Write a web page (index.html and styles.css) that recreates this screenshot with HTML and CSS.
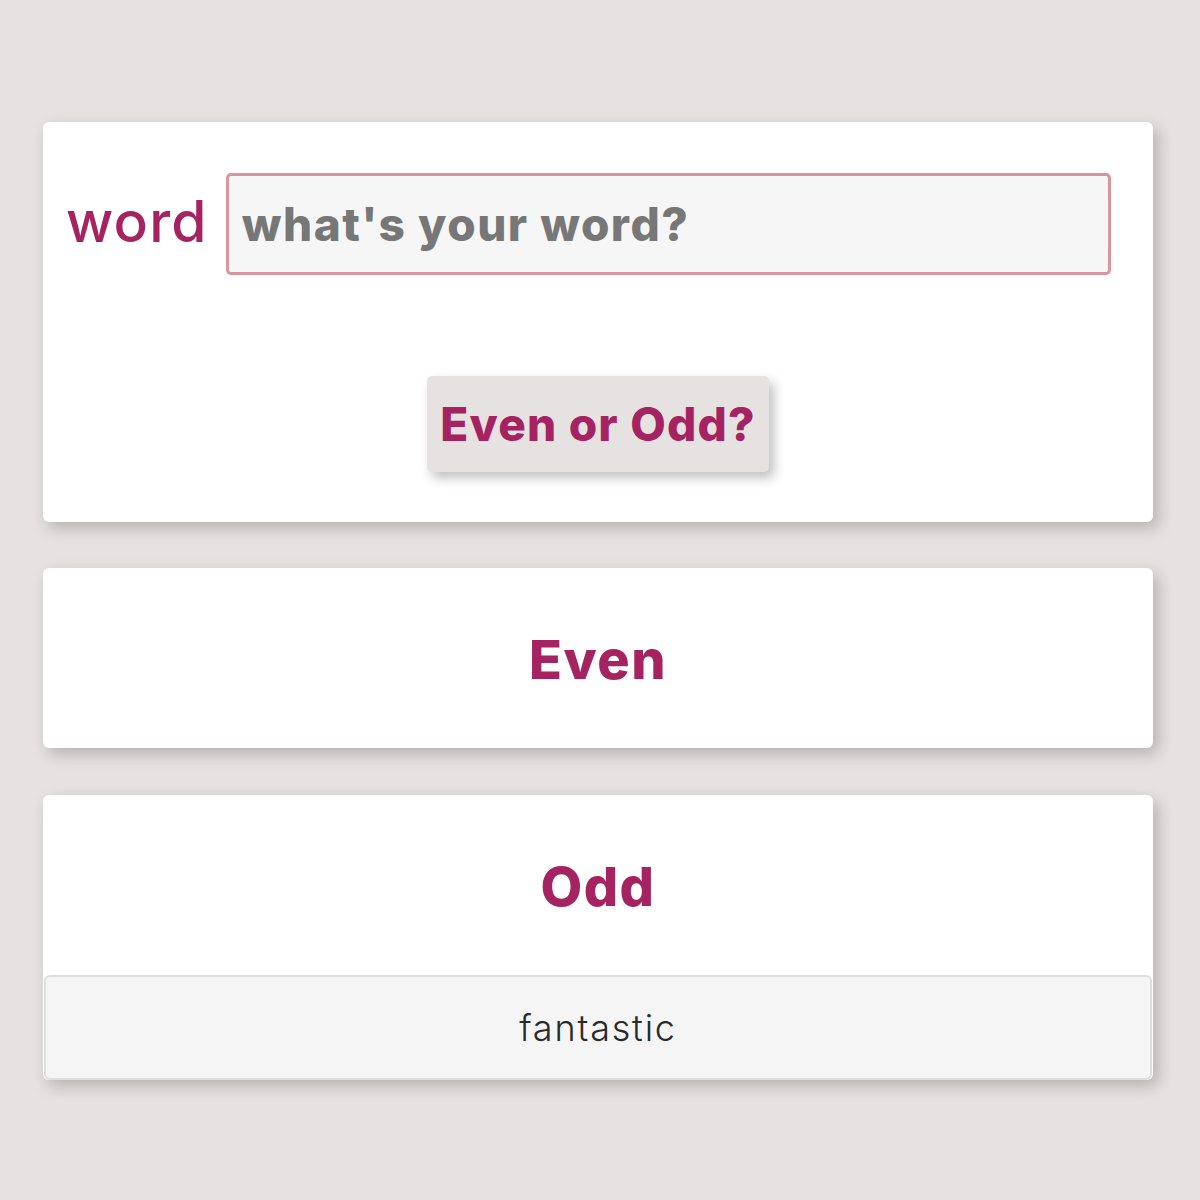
FILE: index.html
```html
<!DOCTYPE html>
<html>
<head>
<meta charset="utf-8">
<link rel="stylesheet" href="styles.css">
</head>
<body>
<main class="page">
  <section class="card card-form">
    <div class="field-row">
      <label class="field-label" for="word">word</label>
      <input class="field-input" id="word" type="text" placeholder="what's your word?">
    </div>
    <div class="button-row">
      <button class="check-button">Even or Odd?</button>
    </div>
  </section>
  <section class="card card-result">
    <h2 class="result-title">Even</h2>
  </section>
  <section class="card card-odd">
    <div class="card-body">
      <h2 class="result-title">Odd</h2>
    </div>
    <div class="card-footer">fantastic</div>
  </section>
</main>
</body>
</html>
```
FILE: styles.css
```css
* { box-sizing: border-box; }
html, body { margin: 0; padding: 0; }
body {
  background: #e6e2e1;
  font-family: "Inter", "Open Sans", sans-serif;
  width: 1200px;
  height: 1200px;
}
.page {
  padding: 122px 47px 0 43px;
  display: flex;
  flex-direction: column;
  gap: 46px;
}
.card {
  background: #ffffff;
  border-radius: 6px;
  box-shadow: 5px 6px 16px rgba(0, 0, 0, 0.22);
}
.card-form {
  height: 400px;
  padding-top: 51px;
}
.field-row {
  display: flex;
  align-items: center;
  gap: 18px;
  padding: 0 42px 0 23px;
}
.field-label {
  color: #a62361;
  font-size: 57px;
  font-weight: 500;
  letter-spacing: 1.2px;
  line-height: 1;
  padding-bottom: 6px;
}
.field-input {
  flex: 1;
  height: 102px;
  border: 3px solid #d8959e;
  border-radius: 5px;
  background: #f6f6f6;
  padding: 0 13px;
  font-family: inherit;
  font-size: 46px;
  font-weight: 800;
  letter-spacing: 1.5px;
  color: #777777;
  outline: none;
}
.field-input::placeholder {
  color: #777777;
  opacity: 1;
}
.button-row {
  display: flex;
  justify-content: center;
  margin-top: 101px;
}
.check-button {
  width: 342px;
  height: 96px;
  background: #e6e2e1;
  border: none;
  border-radius: 5px;
  box-shadow: 5px 6px 12px rgba(0, 0, 0, 0.25);
  color: #a62361;
  font-family: inherit;
  font-size: 46px;
  font-weight: 800;
  letter-spacing: 1.2px;
  padding: 0;
}
.card-result {
  height: 180px;
  display: flex;
  align-items: center;
  justify-content: center;
}
.result-title {
  margin: 0;
  padding-top: 4px;
  color: #a62361;
  font-size: 54px;
  font-weight: 800;
  letter-spacing: 1.5px;
  line-height: 1;
}
.card-odd {
  margin-top: 1px;
  display: flex;
  flex-direction: column;
}
.card-body {
  height: 180px;
  display: flex;
  align-items: center;
  justify-content: center;
}
.card-footer {
  height: 105px;
  margin: 0 1px;
  background: #f5f5f5;
  border: 2px solid #dedede;
  border-radius: 6px;
  display: flex;
  align-items: center;
  justify-content: center;
  font-size: 36px;
  font-weight: 300;
  letter-spacing: 1.8px;
  color: #2a2a2a;
}
```
